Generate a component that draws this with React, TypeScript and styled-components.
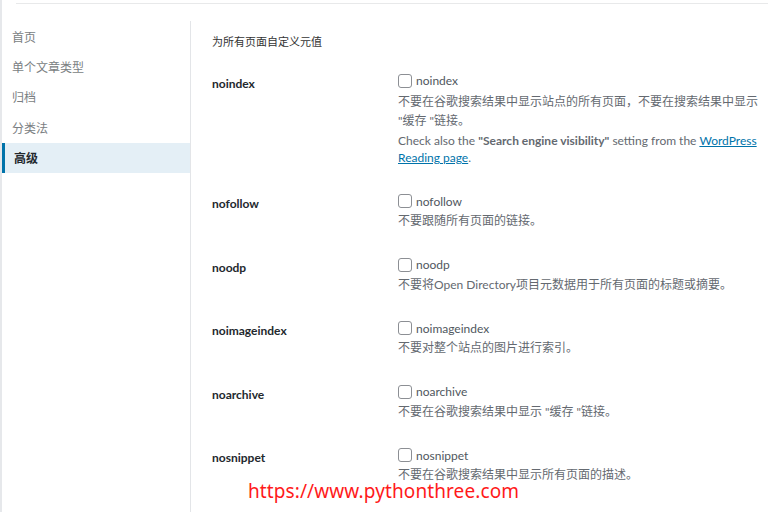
import React from "react";
import styled, { createGlobalStyle } from "styled-components";

const Global = createGlobalStyle`
  html, body { margin: 0; padding: 0; background: #fff; }
  body {
    width: 768px; height: 512px; overflow: hidden;
    font-family: "Lato", "Noto Sans CJK SC", sans-serif;
    color: #444;
  }
`;

const Page = styled.div`
  position: relative;
  display: flex;
  width: 768px;
  height: 512px;
  overflow: hidden;
`;

const LeftStrip = styled.div`
  width: 2px;
  flex: none;
  background: #e6e8eb;
`;

const Column = styled.div`
  flex: 1;
  display: flex;
  flex-direction: column;
`;

const TopEdge = styled.div`
  height: 3px;
  margin-left: 14px;
  border-bottom: 1px solid #e8e9ea;
  flex: none;
`;

const Body = styled.div`
  flex: 1;
  display: flex;
`;

const Sidebar = styled.nav`
  width: 188px;
  flex: none;
  margin-top: 17px;
  border-right: 1px solid #e3e5e8;
  display: flex;
  flex-direction: column;
`;

const NavItem = styled.div<{ $active?: boolean }>`
  height: 30.4px;
  display: flex;
  align-items: center;
  font-size: 12px;
  padding-left: ${(p) => (p.$active ? "9px" : "10px")};
  border-left: ${(p) => (p.$active ? "3px solid #0073aa" : "0")};
  background: ${(p) => (p.$active ? "#e4eff6" : "transparent")};
  color: ${(p) => (p.$active ? "#23282d" : "#7a7e82")};
  font-weight: ${(p) => (p.$active ? 600 : 400)};
`;

const Main = styled.main`
  flex: 1;
  padding: 28.7px 0 0 21px;
`;

const Heading = styled.h2`
  margin: 0 0 8px;
  font-size: 11px;
  line-height: 18px;
  font-weight: 400;
  color: #333;
`;

const Row = styled.div<{ $lead?: boolean }>`
  display: grid;
  grid-template-columns: 186px 1fr;
  padding: 12px 0 ${(p) => (p.$lead ? "13.5px" : "12.5px")};
`;

const Th = styled.div`
  padding-top: 3px;
  font-size: 12px;
  line-height: 20px;
  font-weight: 700;
  color: #23282d;
`;

const Td = styled.div`
  display: flex;
  flex-direction: column;
`;

const CheckLine = styled.label`
  height: 20px;
  display: flex;
  align-items: center;
  gap: 4px;
  font-size: 12px;
  color: #50575e;
`;

const Box = styled.span`
  width: 12px;
  height: 12px;
  border: 1px solid #8c8f94;
  border-radius: 3px;
  background: #fff;
  flex: none;
`;

const Desc = styled.p<{ $lead?: boolean }>`
  margin: ${(p) => (p.$lead ? "1px 0 0" : "0")};
  font-size: 12px;
  line-height: 19px;
  color: #646970;
  white-space: nowrap;
`;

const Note = styled.p`
  margin: 2px 0 0;
  font-size: 12px;
  line-height: 17px;
  color: #646970;
  white-space: nowrap;
`;

const Link = styled.a`
  color: #0073aa;
  text-decoration: underline;
`;

const Watermark = styled.div`
  position: absolute;
  left: 248px;
  top: 478px;
  font-family: "Noto Sans", sans-serif;
  font-size: 19px;
  line-height: 26px;
  color: #ff1a1a;
  letter-spacing: 0.1px;
`;

type Opt = { key: string; desc: string };

const options: Opt[] = [
  { key: "nofollow", desc: "不要跟随所有页面的链接。" },
  { key: "noodp", desc: "不要将Open Directory项目元数据用于所有页面的标题或摘要。" },
  { key: "noimageindex", desc: "不要对整个站点的图片进行索引。" },
  { key: "noarchive", desc: "不要在谷歌搜索结果中显示 \"缓存 \"链接。" },
  { key: "nosnippet", desc: "不要在谷歌搜索结果中显示所有页面的描述。" },
  { key: "notranslate", desc: "不要在谷歌搜索结果中提供翻译。" },
];

export default function App() {
  return (
    <>
      <Global />
      <Page>
        <LeftStrip />
        <Column>
          <TopEdge />
          <Body>
            <Sidebar>
              <NavItem>首页</NavItem>
              <NavItem>单个文章类型</NavItem>
              <NavItem>归档</NavItem>
              <NavItem>分类法</NavItem>
              <NavItem $active>高级</NavItem>
            </Sidebar>
            <Main>
              <Heading>为所有页面自定义元值</Heading>
              <Row $lead>
                <Th>noindex</Th>
                <Td>
                  <CheckLine>
                    <Box />
                    noindex
                  </CheckLine>
                  <Desc $lead>
                    不要在谷歌搜索结果中显示站点的所有页面，不要在搜索结果中显示
                    <br />
                    "缓存 "链接。
                  </Desc>
                  <Note>
                    Check also the <b>"Search engine visibility"</b> setting from the{" "}
                    <Link href="#">
                      WordPress
                      <br />
                      Reading page
                    </Link>
                    .
                  </Note>
                </Td>
              </Row>
              {options.map((o) => (
                <Row key={o.key}>
                  <Th>{o.key}</Th>
                  <Td>
                    <CheckLine>
                      <Box />
                      {o.key}
                    </CheckLine>
                    <Desc>{o.desc}</Desc>
                  </Td>
                </Row>
              ))}
            </Main>
          </Body>
        </Column>
        <Watermark>https://www.pythonthree.com</Watermark>
      </Page>
    </>
  );
}
